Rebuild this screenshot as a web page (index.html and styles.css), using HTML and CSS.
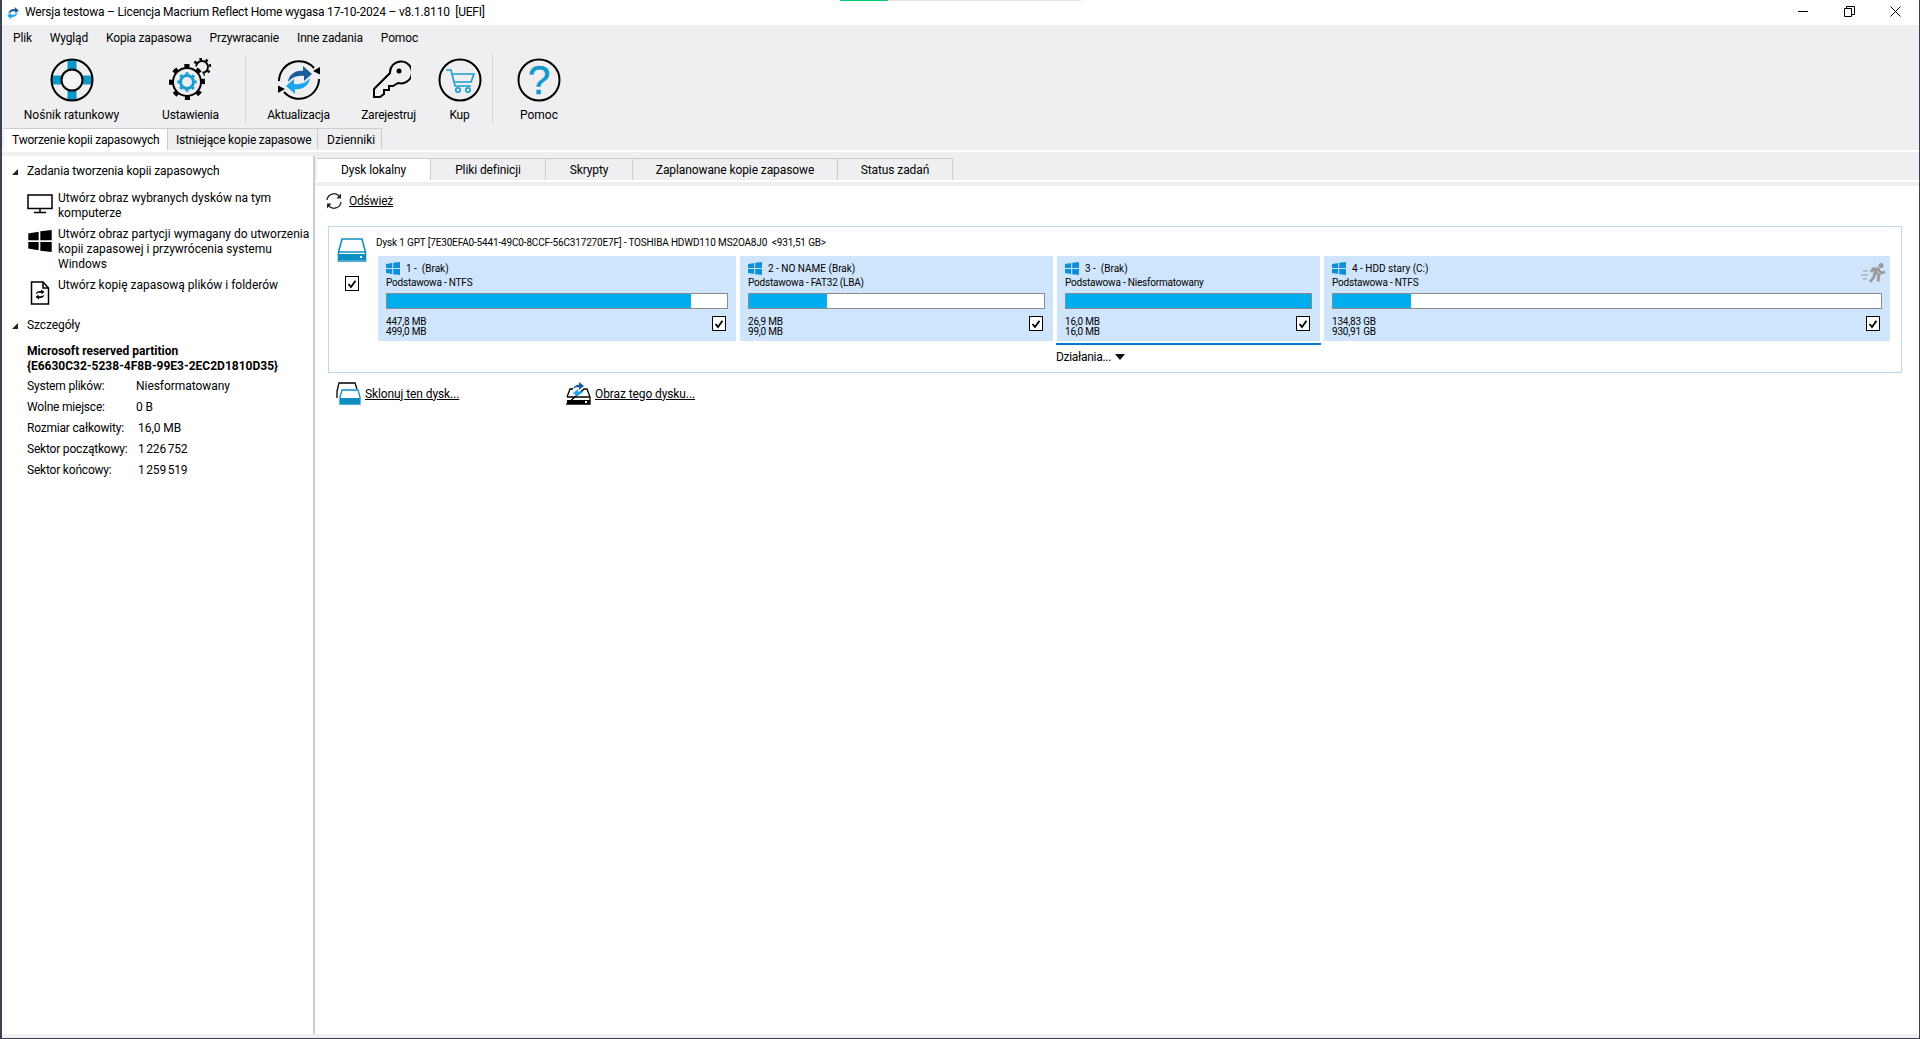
FILE: index.html
```html
<!DOCTYPE html>
<html lang="pl">
<head>
<meta charset="utf-8">
<title>Macrium Reflect</title>
<link rel="stylesheet" href="styles.css">
</head>
<body>
<svg class="defs" width="0" height="0">
  <symbol id="win" viewBox="0 0 14 13">
    <path d="M0 2 6.2 1V6.1H0ZM7.2 .8 14 0V6.1H7.2ZM0 7.1H6.2V12L0 11ZM7.2 7.1H14V13L7.2 12.2Z"/>
  </symbol>
  <symbol id="check" viewBox="0 0 14 14">
    <path d="M3.5 7 6 10 10.5 3.8" fill="none" stroke="#000" stroke-width="1.8"/>
  </symbol>
  <symbol id="arrows" viewBox="0 0 44 44">
    <path fill="#1d5c99" d="M11 24C12 16 19 12 26 13V8L35 16 27 23V18C21 17 15 19 11 24Z"/>
    <path fill="#1ba5ea" d="M33 20C32 28 25 32 18 31V36L9 28 17 21V26C23 27 29 25 33 20Z"/>
  </symbol>
</svg>
<div class="progress"><div class="progress-done"></div></div>
<div class="window">
  <header class="titlebar">
    <svg class="app-icon" width="14" height="14" viewBox="6 6 32 32"><use href="#arrows" width="44" height="44"/></svg>
    <span class="title">Wersja testowa – Licencja Macrium Reflect Home wygasa 17-10-2024 – v8.1.8110  [UEFI]</span>
    <div class="controls">
      <svg width="11" height="11" viewBox="0 0 11 11"><path d="M0 5.5H10" stroke="#000"/></svg>
      <svg width="11" height="11" viewBox="0 0 11 11"><path d="M.5 2.5H7.5V10.5H.5ZM2.5 2.5V.5H10.5V8.5H7.5" fill="none" stroke="#000"/></svg>
      <svg width="11" height="11" viewBox="0 0 11 11"><path d="M.5 .5 10.5 10.5M10.5 .5 .5 10.5" stroke="#000"/></svg>
    </div>
  </header>
  <nav class="menubar">
    <span class="menu-item">Plik</span>
    <span class="menu-item">Wygląd</span>
    <span class="menu-item">Kopia zapasowa</span>
    <span class="menu-item">Przywracanie</span>
    <span class="menu-item">Inne zadania</span>
    <span class="menu-item">Pomoc</span>
  </nav>
  <div class="toolbar">
    <div class="tool tool-a">
      <svg width="44" height="44" viewBox="0 0 44 44">
        <rect x="17.5" y="2" width="9" height="40" fill="#0d97c9"/>
        <rect x="2" y="17.5" width="40" height="9" fill="#0d97c9"/>
        <circle cx="22" cy="22" r="20.5" fill="none" stroke="#000" stroke-width="2"/>
        <circle cx="22" cy="22" r="10.5" fill="#f4f4f6" stroke="#000" stroke-width="2"/>
      </svg>
      <span>Nośnik ratunkowy</span>
    </div>
    <div class="tool tool-b">
      <svg width="44" height="44" viewBox="0 0 44 44">
        <circle cx="33" cy="9" r="6" fill="none" stroke="#000" stroke-width="1.800"/>
        <circle cx="33" cy="9" r="8" fill="none" stroke="#000" stroke-width="2.500" stroke-dasharray="2.500 3.780" transform="rotate(-20 33 9)"/>
        <circle cx="18" cy="24" r="18" fill="#efeff2"/>
        <circle cx="18" cy="24" r="14" fill="#efeff2" stroke="#000" stroke-width="2"/>
        <circle cx="18" cy="24" r="16" fill="none" stroke="#000" stroke-width="4" stroke-dasharray="5 7.566" transform="rotate(-11 18 24)"/>
        <circle cx="18" cy="24" r="6.500" fill="none" stroke="#1a9ed0" stroke-width="3"/>
        <circle cx="18" cy="24" r="8.500" fill="none" stroke="#1a9ed0" stroke-width="2.500" stroke-dasharray="2.800 3.870" transform="rotate(-10 18 24)"/>
      </svg>
      <span>Ustawienia</span>
    </div>
    <div class="tool-sep"></div>
    <div class="tool tool-c">
      <svg width="44" height="44" viewBox="0 0 44 44">
        <path d="M37 10A20 20 0 0 0 2 23" fill="none" stroke="#000" stroke-width="2"/>
        <path d="M7 34A20 20 0 0 0 42 21" fill="none" stroke="#000" stroke-width="2"/>
        <path d="M36 13 43 9V16.500ZM8 31 1 35V27.500Z"/>
        <use href="#arrows" width="44" height="44"/>
      </svg>
      <span>Aktualizacja</span>
    </div>
    <div class="tool tool-d">
      <svg width="44" height="44" viewBox="-6 -3 44 44">
        <path d="M17 12A11 11 0 1 1 25 22L20 25H16V29H11V33L7 36H1V28Z" fill="none" stroke="#000" stroke-width="2"/>
        <circle cx="26" cy="10" r="2.500"/>
      </svg>
      <span>Zarejestruj</span>
    </div>
    <div class="tool tool-e">
      <svg width="44" height="44" viewBox="0 0 44 44">
        <circle cx="22" cy="22" r="20.500" fill="none" stroke="#000" stroke-width="2"/>
        <path d="M8 12H13L17 28H33M15 16H36L33 24H17" fill="none" stroke="#1a9ed0" stroke-width="1.700"/>
        <circle cx="20" cy="32" r="2.200" fill="none" stroke="#1a9ed0" stroke-width="1.700"/>
        <circle cx="30" cy="32" r="2.200" fill="none" stroke="#1a9ed0" stroke-width="1.700"/>
      </svg>
      <span>Kup</span>
    </div>
    <div class="tool-sep"></div>
    <div class="tool tool-f">
      <svg width="44" height="44" viewBox="0 0 44 44">
        <circle cx="22" cy="22" r="20.500" fill="none" stroke="#000" stroke-width="2"/>
        <text class="help-mark" x="22" y="36" text-anchor="middle">?</text>
      </svg>
      <span>Pomoc</span>
    </div>
  </div>
  <div class="main-tabs">
    <span class="main-tab active">Tworzenie kopii zapasowych</span>
    <span class="main-tab">Istniejące kopie zapasowe</span>
    <span class="main-tab">Dzienniki</span>
  </div>
  <div class="tabs-rule"></div>
  <div class="main">
    <aside class="side">
      <div class="side-head"><i class="tri"></i>Zadania tworzenia kopii zapasowych</div>
      <div class="task task-first">
        <span class="task-icon">
          <svg width="26" height="20" viewBox="0 0 26 20"><path d="M1 1H25V14.500H1ZM13 15V18M7 18.500H19" fill="none" stroke="#000" stroke-width="1.500"/></svg>
        </span>
        <span>Utwórz obraz wybranych dysków na tym komputerze</span>
      </div>
      <div class="task">
        <span class="task-icon">
          <svg width="24" height="22" viewBox="0 0 14 13"><use href="#win" width="14" height="13"/></svg>
        </span>
        <span>Utwórz obraz partycji wymagany do utworzenia kopii zapasowej i przywrócenia systemu Windows</span>
      </div>
      <div class="task">
        <span class="task-icon">
          <svg width="20" height="24" viewBox="0 0 20 24">
            <path d="M1.500 1H13L18.500 7V23H1.500ZM13 1V7H18.500" fill="none" stroke="#000" stroke-width="1.500"/>
            <path d="M5.500 13.500C6 10.500 9 9.500 11 10V8.500L14.500 11 11.500 13.500V12C9 11.500 7 12 5.500 13.500ZM14.500 13.500C14 16.500 11 17.500 9 17V18.500L5.500 16 8.500 13.500V15C11 15.500 13 15 14.500 13.500Z"/>
          </svg>
        </span>
        <span>Utwórz kopię zapasową plików i folderów</span>
      </div>
      <div class="side-head side-head-details"><i class="tri"></i>Szczegóły</div>
      <div class="detail-name">Microsoft reserved partition<br>{E6630C32-5238-4F8B-99E3-2EC2D1810D35}</div>
      <div class="detail-row"><span class="k k-narrow">System plików:</span><span class="v">Niesformatowany</span></div>
      <div class="detail-row"><span class="k k-narrow">Wolne miejsce:</span><span class="v">0 B</span></div>
      <div class="detail-row"><span class="k">Rozmiar całkowity:</span><span class="v">16,0 MB</span></div>
      <div class="detail-row"><span class="k">Sektor początkowy:</span><span class="v num">1 226 752</span></div>
      <div class="detail-row"><span class="k">Sektor końcowy:</span><span class="v num">1 259 519</span></div>
    </aside>
    <div class="splitter"></div>
    <section class="content">
      <div class="sub-tabs">
        <span class="sub-tab active t1">Dysk lokalny</span>
        <span class="sub-tab t2">Pliki definicji</span>
        <span class="sub-tab t3">Skrypty</span>
        <span class="sub-tab t4">Zaplanowane kopie zapasowe</span>
        <span class="sub-tab t5">Status zadań</span>
      </div>
      <div class="sub-rule"></div>
      <div class="refresh">
        <svg width="18" height="18" viewBox="0 0 18 18">
          <path d="M2 8A7 7 0 0 1 14.500 4.500M16 10A7 7 0 0 1 3.500 13.500" fill="none" stroke="#222" stroke-width="1.300"/>
          <path d="M16 1.500V6.500H11.500ZM2 16.500V11.500H6.500Z" fill="#222"/>
        </svg>
        <a class="link">Odśwież</a>
      </div>
      <div class="disk">
        <div class="disk-side">
          <svg width="30" height="24" viewBox="0 0 30 24">
            <path d="M1.500 14 5 1H25L28.500 14V23H1.500ZM1.500 14H28.500" fill="none" stroke="#0e8fc3" stroke-width="1.600"/>
            <rect x="2" y="16" width="26" height="6" fill="#0e8fc3"/>
            <rect x="23" y="18" width="2" height="2" fill="#fff"/>
          </svg>
          <span class="cb"><svg width="14" height="14"><use href="#check"/></svg></span>
        </div>
        <div class="disk-main">
          <div class="disk-title">Dysk 1 GPT [7E30EFA0-5441-49C0-8CCF-56C317270E7F] - TOSHIBA HDWD110 MS2OA8J0  &lt;931,51 GB&gt;</div>
          <div class="parts">
            <div class="part p1">
              <div class="part-head"><svg class="win" width="14" height="13"><use href="#win"/></svg><span>1 -  (Brak)</span></div>
              <div class="part-type">Podstawowa - NTFS</div>
              <div class="bar"><div class="fill" style="width:89.400%"></div></div>
              <div class="part-foot"><div class="sizes">447,8 MB<br>499,0 MB</div><span class="cb"><svg width="14" height="14"><use href="#check"/></svg></span></div>
            </div>
            <div class="part p2">
              <div class="part-head"><svg class="win" width="14" height="13"><use href="#win"/></svg><span>2 - NO NAME (Brak)</span></div>
              <div class="part-type">Podstawowa - FAT32 (LBA)</div>
              <div class="bar"><div class="fill" style="width:26.400%"></div></div>
              <div class="part-foot"><div class="sizes">26,9 MB<br>99,0 MB</div><span class="cb"><svg width="14" height="14"><use href="#check"/></svg></span></div>
            </div>
            <div class="part p3">
              <div class="part-head"><svg class="win" width="14" height="13"><use href="#win"/></svg><span>3 -  (Brak)</span></div>
              <div class="part-type">Podstawowa - Niesformatowany</div>
              <div class="bar"><div class="fill" style="width:100%"></div></div>
              <div class="part-foot"><div class="sizes">16,0 MB<br>16,0 MB</div><span class="cb"><svg width="14" height="14"><use href="#check"/></svg></span></div>
            </div>
            <div class="part p4">
              <div class="part-head"><svg class="win" width="14" height="13"><use href="#win"/></svg><span>4 - HDD stary (C:)</span></div>
              <div class="part-type">Podstawowa - NTFS</div>
              <div class="bar"><div class="fill" style="width:14.300%"></div></div>
              <div class="part-foot"><div class="sizes">134,83 GB<br>930,91 GB</div><span class="cb"><svg width="14" height="14"><use href="#check"/></svg></span></div>
              <svg class="runner" width="26" height="20" viewBox="0 0 26 20">
                <circle cx="21" cy="2.600" r="2.500" fill="#999"/>
                <path d="M19 5 15 9 14 14 10 19M15 9 19 12 18 18.500M18 6 21 10 25 9M17 6 13 6 11 9" fill="none" stroke="#999" stroke-width="2.800"/>
                <path d="M3 8H8M1 12H8M3 16H7" stroke="#999" stroke-width="1.200"/>
              </svg>
            </div>
          </div>
          <div class="actions">Działania... <i class="caret"></i></div>
        </div>
      </div>
      <div class="disk-links">
        <div class="disk-link dl-clone">
          <svg width="25" height="23" viewBox="0 0 25 23">
            <path d="M1 16V9L3 1H19L21 7" fill="none" stroke="#000" stroke-width="1.300"/>
            <path d="M4 15 6 8H22L24 15V22H4Z" fill="#fff" stroke="#0e8fc3" stroke-width="1.300"/>
            <rect x="4" y="16" width="20" height="6" fill="#0e8fc3"/>
          </svg>
          <a class="link">Sklonuj ten dysk...</a>
        </div>
        <div class="disk-link">
          <svg width="25" height="23" viewBox="0 0 25 23">
            <path d="M1 15 4 7H7M18 7H21L24 15V22H1ZM1 15H24" fill="none" stroke="#000" stroke-width="1.300"/>
            <rect x="1" y="18" width="23" height="4"/>
            <rect x="19" y="19" width="2" height="2" fill="#fff"/>
            <path fill="#1d5c99" d="M7 7C8 4 11 2 13 3V0L18 4 13 8V5.500C11 5 9 5.500 7 7Z"/>
            <path fill="#1ba5ea" d="M18 8C17 11 14 13 12 12V15L7 11 12 7V9.500C14 10 16 9.500 18 8Z"/>
          </svg>
          <a class="link">Obraz tego dysku...</a>
        </div>
      </div>
    </section>
  </div>
</div>
</body>
</html>
```

FILE: styles.css
```css
* { box-sizing: border-box; }
html, body { margin: 0; height: 100%; }
body {
  background: #3c4150;
  font-family: Roboto, "Liberation Sans", sans-serif;
  font-size: 12px;
  letter-spacing: -0.2px;
  color: #000;
  overflow: hidden;
}
.defs { position: absolute; }
.progress {
  position: absolute;
  left: 840px;
  top: 0;
  width: 241px;
  height: 1px;
  background: #e2e2e2;
}
.progress-done { width: 48px; height: 1px; background: #00c870; }
.window {
  margin: 0 1px 0 2px;
  height: 1038px;
  display: flex;
  flex-direction: column;
  background: #efeff2;
}
.titlebar {
  height: 25px;
  flex: none;
  background: #fff;
  display: flex;
  align-items: center;
}
.app-icon { margin-left: 4px; }
.title { margin-left: 5px; white-space: pre; line-height: 25px; }
.controls { margin-left: auto; display: flex; gap: 35px; margin-right: 18px; margin-top: -3px; }
.menubar { height: 26px; flex: none; display: flex; align-items: center; padding-left: 11px; letter-spacing: -0.16px; }
.menu-item { margin-right: 18px; }
.toolbar { height: 77px; flex: none; display: flex; }
.tool {
  display: flex;
  flex-direction: column;
  align-items: center;
  padding-top: 7px;
  white-space: nowrap;
}
.tool span { margin-top: 5px; line-height: 16px; }
.tool-a { width: 139px; letter-spacing: 0; }
.tool-b { width: 99px; margin-right: 5px; }
.tool-c { width: 103px; margin-left: 1px; }
.tool-d { width: 77px; }
.tool-e { width: 65px; }
.tool-f { width: 92px; letter-spacing: 0; }
.tool-sep { width: 1px; height: 69px; margin-top: 3px; background: #d4d4d6; }
.help-mark { font: 40px "Liberation Sans", sans-serif; fill: #0f9bcb; stroke: #0f9bcb; stroke-width: .6px; letter-spacing: 0; }
.main-tabs { height: 22px; flex: none; display: flex; padding-left: 2px; }
.main-tab {
  height: 22px;
  padding: 1px 8px 0;
  line-height: 21px;
  border-top: 1px solid #ccc;
  border-right: 1px solid #ccc;
  white-space: nowrap;
}
.main-tab.active { background: #fff; width: 164px; }
.main-tab:nth-child(2) { width: 150px; }
.main-tab:nth-child(3) { width: 64px; padding-left: 9px; letter-spacing: 0; }
.tabs-rule { height: 2px; flex: none; background: #fff; }
.main {
  margin-top: 4px;
  height: 878px;
  flex: none;
  display: flex;
  background: #fff;
}
.side { width: 311px; flex: none; padding: 8px 0 0 25px; line-height: 15px; }
.side-head { position: relative; height: 15px; letter-spacing: -0.1px; }
.tri {
  position: absolute;
  left: -15px;
  top: 5px;
  width: 0;
  height: 0;
  border-style: solid;
  border-width: 0 0 6px 6px;
  border-color: transparent transparent #222 transparent;
}
.task { display: flex; margin-top: 6px; letter-spacing: 0; }
.task-first { margin-top: 12px; }
.task-icon { width: 31px; flex: none; display: flex; justify-content: center; padding-right: 5px; padding-top: 3px; }
.side-head-details { margin-top: 13px; }
.detail-name { font-weight: 700; margin-top: 11px; letter-spacing: 0; }
.detail-row { display: flex; height: 21px; align-items: center; margin-top: 0; }
.detail-name + .detail-row { margin-top: 2px; }
.k { width: 111px; flex: none; }
.k-narrow { width: 109px; }
.v { letter-spacing: -0.05px; }
.num { word-spacing: -1px; letter-spacing: -0.2px; }
.splitter { width: 2px; flex: none; background: #ccc; }
.content { flex: 1; min-width: 0; display: flex; flex-direction: column; }
.sub-tabs { height: 24px; flex: none; padding: 2px 0 0 2px; background: #efeff2; display: flex; letter-spacing: -0.1px; }
.sub-tab {
  height: 22px;
  padding-top: 1px;
  line-height: 21px;
  text-align: center;
  border-top: 1px solid #ccc;
  border-right: 1px solid #ccc;
  white-space: nowrap;
}
.sub-tab.active { background: #fff; }
.t1 { width: 114px; }
.t2 { width: 115px; }
.t3 { width: 87px; }
.t4 { width: 205px; }
.t5 { width: 115px; }
.sub-rule { height: 6px; flex: none; border-top: 2px solid #fff; background: #efeff2; }
.refresh { display: flex; align-items: center; gap: 6px; margin: 6px 0 0 10px; height: 18px; }
.link { text-decoration: underline; color: #000; }
.disk {
  margin: 16px 17px 0 13px;
  height: 147px;
  flex: none;
  border: 1px solid #b9dcf3;
  display: flex;
}
.disk-side { width: 49px; flex: none; padding: 11px 0 0 8px; display: flex; flex-direction: column; }
.disk-side .cb { margin: 14px 0 0 8px; }
.disk-main { flex: 1; min-width: 0; }
.disk-title { font-size: 10px; line-height: 14px; margin: 9px 0 0 -2px; white-space: pre; letter-spacing: -0.16px; }
.parts { display: flex; gap: 4px; margin-top: 6px; }
.part { position: relative; height: 85px; background: #cfe5fc; padding: 6px 8px 0; font-size: 10px; }
.p1 { width: 358px; }
.p2 { width: 313px; }
.p3 { width: 263px; }
.p4 { width: 566px; }
.part-head { display: flex; align-items: center; height: 13px; gap: 6px; white-space: pre; letter-spacing: 0; }
.win { fill: #0e8fdc; flex: none; }
.part-type { line-height: 14px; margin-top: 1px; white-space: pre; }
.bar { height: 16px; margin-top: 3px; background: #fff; border: 1px solid #8b8b8b; }
.fill { height: 100%; background: #00adef; }
.part-foot { display: flex; justify-content: space-between; margin-top: 7px; }
.sizes { line-height: 9.500px; padding-top: 1px; }
.cb {
  width: 14px;
  height: 15px;
  flex: none;
  background: #fff;
  border: 1px solid #000;
  display: flex;
  align-items: center;
  justify-content: center;
}
.cb svg { flex: none; }
.part-foot .cb { margin-right: 2px; }
.runner { position: absolute; right: 4px; top: 7px; }
.actions {
  width: 265px;
  margin: 2px 0 0 678px;
  padding-top: 5px;
  border-top: 2px solid #0078d7;
  font-size: 12px;
  letter-spacing: -0.3px;
  line-height: 14px;
}
.caret {
  display: inline-block;
  width: 0;
  height: 0;
  margin-left: 1px;
  vertical-align: 1px;
  border-style: solid;
  border-width: 6px 5px 0;
  border-color: #111 transparent transparent;
}
.disk-links { display: flex; margin: 9px 0 0 21px; }
.disk-link { display: flex; align-items: center; gap: 4px; height: 23px; font-size: 12px; letter-spacing: -0.1px; }
.dl-clone { width: 230px; }
```
